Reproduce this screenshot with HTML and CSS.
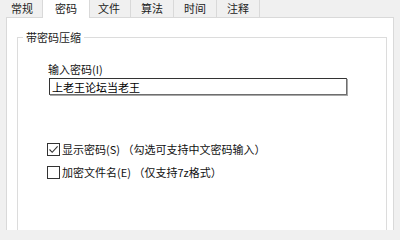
FILE: index.html
```html
<!DOCTYPE html>
<html lang="zh-CN">
<head>
<meta charset="utf-8">
<title>带密码压缩</title>
<link rel="stylesheet" href="styles.css">
</head>
<body>
<div class="tabs">
  <div class="tab">常规</div>
  <div class="tab active">密码</div>
  <div class="tab">文件</div>
  <div class="tab">算法</div>
  <div class="tab">时间</div>
  <div class="tab">注释</div>
</div>
<div class="panel">
  <fieldset class="group">
    <legend class="group-title">带密码压缩</legend>
    <div class="group-body">
      <div class="field-label">输入密码(I)</div>
      <input class="textbox" type="text" value="上老王论坛当老王">
      <div class="check-row first">
        <span class="box"><svg width="11" height="11" viewBox="0 0 11 11"><polyline points="1.5,5.5 4.2,8.3 9.6,2.4" fill="none" stroke="#333" stroke-width="1.1"/></svg></span>
        <span class="check-text">显示密码(S)&nbsp;（勾选可支持中文密码输入）</span>
      </div>
      <div class="check-row">
        <span class="box"></span>
        <span class="check-text">加密文件名(E)&nbsp;（仅支持7z格式）</span>
      </div>
    </div>
  </fieldset>
</div>
</body>
</html>
```

FILE: styles.css
```css
html, body {
  margin: 0;
  padding: 0;
}
body {
  width: 400px;
  height: 230px;
  overflow: hidden;
  background: #f0f0f0;
  font-family: "Noto Sans CJK SC", "Microsoft YaHei", sans-serif;
  font-size: 11px;
  line-height: 14px;
  color: #111;
}
.tabs {
  display: flex;
  height: 17px;
  padding-left: 1px;
}
.tab {
  height: 17px;
  line-height: 16px;
  padding: 0 10px;
  border-right: 1px solid #d9d9d9;
  color: #222;
  white-space: nowrap;
}
.tab.active {
  position: relative;
  z-index: 1;
  background: #fff;
  height: 19px;
  margin: -1px -2px -1px -2px;
  padding: 0 12px;
  line-height: 18px;
  border-left: 1px solid #d9d9d9;
  border-right: 1px solid #d9d9d9;
}
.tab.active + .tab {
  border-left: none;
}
.panel {
  margin-left: 6px;
  width: 386px;
  height: 230px;
  background: #fff;
  border: 1px solid #d9d9d9;
}
.group {
  margin: 12px 6px 0 10px;
  padding: 0;
  height: 200px;
  border: 1px solid #dcdcdc;
  min-width: 0;
}
.group-title {
  margin-left: 5px;
  padding: 0 3px;
  line-height: 14px;
  color: #222;
}
.group-body {
  padding-left: 30px;
}
.field-label {
  margin-top: 18px;
}
.textbox {
  display: block;
  box-sizing: border-box;
  margin: 2px 0 0 1px;
  width: 298px;
  height: 17px;
  padding: 0 0 0 2px;
  border: 1px solid;
  border-color: #333 #6e6e6e #6e6e6e #333;
  box-shadow: 1px 1px 0 #a8a8a8;
  outline: none;
  font-family: inherit;
  font-size: 11px;
  line-height: 15px;
  color: #000;
  background: #fff;
}
.check-row {
  display: flex;
  align-items: center;
  height: 16px;
  margin-top: 7px;
  margin-left: -1px;
}
.check-row.first {
  margin-top: 46px;
}
.box {
  box-sizing: border-box;
  width: 13px;
  height: 13px;
  border: 1px solid #333;
  background: #fff;
  display: flex;
  align-items: center;
  justify-content: center;
  flex: none;
}
.box svg {
  display: block;
}
.check-text {
  margin-left: 2px;
  white-space: nowrap;
}
```
